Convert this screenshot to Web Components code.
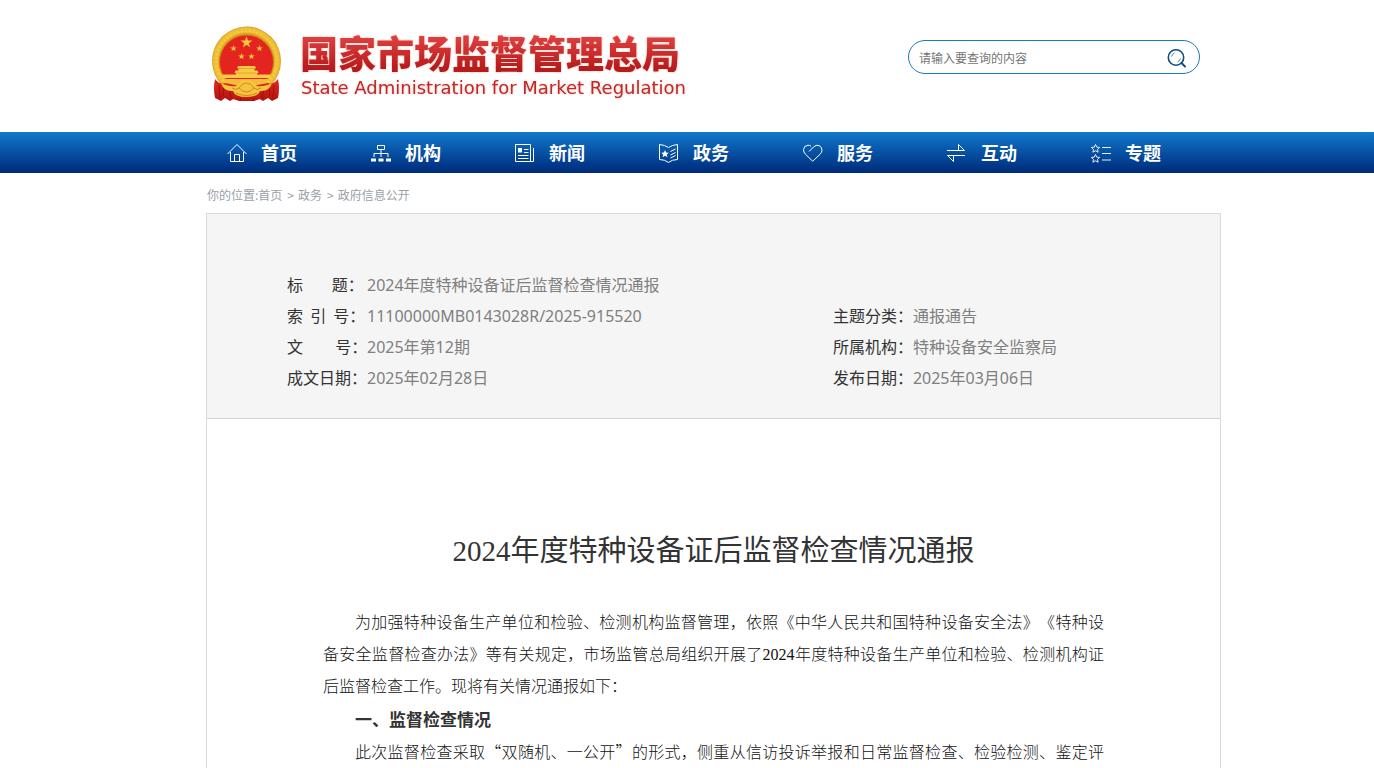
<!DOCTYPE html>
<html lang="zh-CN">
<head>
<meta charset="utf-8">
<meta name="viewport" content="width=device-width, initial-scale=1">
<title>2024年度特种设备证后监督检查情况通报</title>
<style>
  :root {
    --sans: "Noto Sans", "Noto Sans CJK SC", sans-serif;
    --cjk: "Noto Sans CJK SC", sans-serif;
    --mixed: "Liberation Serif", "Noto Sans CJK SC", sans-serif;
    --frame: #d5dae3;
  }
  body { margin: 0; background: #fff; font-family: var(--sans); color: #333; }
</style>
</head>
<body>
<samr-page>
  <samr-header slot="header">
    <samr-brand slot="brand"></samr-brand>
    <samr-search slot="search"></samr-search>
  </samr-header>
  <samr-nav slot="nav">
    <samr-nav-item icon="home">首页</samr-nav-item>
    <samr-nav-item icon="org">机构</samr-nav-item>
    <samr-nav-item icon="news">新闻</samr-nav-item>
    <samr-nav-item icon="book">政务</samr-nav-item>
    <samr-nav-item icon="heart">服务</samr-nav-item>
    <samr-nav-item icon="swap">互动</samr-nav-item>
    <samr-nav-item icon="topics">专题</samr-nav-item>
  </samr-nav>
  <samr-breadcrumb></samr-breadcrumb>
  <samr-meta>
    <samr-field wide label="标        题：">2024年度特种设备证后监督检查情况通报</samr-field>
    <samr-field label="索  引  号：">11100000MB0143028R/2025-915520</samr-field>
    <samr-field label="主题分类：">通报通告</samr-field>
    <samr-field label="文         号：">2025年第12期</samr-field>
    <samr-field label="所属机构：">特种设备安全监察局</samr-field>
    <samr-field label="成文日期：">2025年02月28日</samr-field>
    <samr-field label="发布日期：">2025年03月06日</samr-field>
  </samr-meta>
  <samr-article></samr-article>
</samr-page>

<script>
class BaseElement extends HTMLElement {
  constructor() {
    super();
    this.attachShadow({ mode: 'open' }).innerHTML = this.constructor.markup;
  }
}

class SamrPage extends BaseElement {
  static markup = `
    <style>
      :host { display: flex; flex-direction: column; min-height: 100vh; }
      main {
        flex: 1; display: flex; flex-direction: column;
        box-sizing: border-box; width: 100%; max-width: 1068px;
        margin: 0 auto; padding-left: 53px;
      }
      ::slotted(samr-article) { flex: 1; }
    </style>
    <slot name="header"></slot>
    <slot name="nav"></slot>
    <main><slot></slot></main>`;
}

class SamrHeader extends BaseElement {
  static markup = `
    <style>
      :host { display: block; }
      header {
        box-sizing: border-box; width: 100%; max-width: 1068px; height: 132px;
        margin: 0 auto; padding: 26px 21px 0 59px;
        display: flex; justify-content: space-between; align-items: flex-start;
      }
      ::slotted(samr-search) { margin-top: 14px; }
    </style>
    <header><slot name="brand"></slot><slot name="search"></slot></header>`;
}

class SamrBrand extends BaseElement {
  static markup = `
    <style>
      :host { display: block; }
      a { display: flex; gap: 18px; text-decoration: none; color: #c3272b; }
      svg { width: 70px; height: 76px; flex: none; }
      .names { display: flex; flex-direction: column; padding-top: 6px; white-space: nowrap; }
      .names { filter: drop-shadow(0 0 1px rgba(225, 140, 110, .55)); }
      strong {
        font: 900 38px/40px var(--cjk);
        background: linear-gradient(#e04040 10%, #b91a1c 90%);
        -webkit-background-clip: text; background-clip: text; color: transparent;
      }
      .en { font: 18px/22px "DejaVu Sans", sans-serif; padding: 5px 0 0 1px; }
    </style>
    <a href="#">
      <svg viewBox="0 0 70 76" aria-hidden="true">
        <defs>
          <radialGradient id="gold" cx=".5" cy=".5" r=".5">
            <stop offset=".78" stop-color="#d99a1e"/><stop offset=".86" stop-color="#f7cf3e"/>
            <stop offset=".95" stop-color="#efbd33"/><stop offset="1" stop-color="#d9982a"/>
          </radialGradient>
          <linearGradient id="cloth" x1="0" x2="0" y1="0" y2="1">
            <stop offset="0" stop-color="#e02a20"/><stop offset="1" stop-color="#b5120f"/>
          </linearGradient>
          <path id="star" d="M0-10 2.3-3.1 9.5-3.1 3.7 1.2 5.9 8.1 0 3.8-5.9 8.1-3.7 1.2-9.5-3.1-2.3-3.1Z" fill="#f9c93c"/>
        </defs>
        <circle cx="34.500" cy="35" r="34.500" fill="url(#gold)"/>
        <circle cx="34.500" cy="35" r="30.500" fill="none" stroke="#e3ac2e" stroke-width="3" stroke-dasharray="1.500 2.500" opacity=".4"/>
        <circle cx="34.500" cy="36" r="27" fill="#e3241f" stroke="#c98a1a" stroke-width=".8"/>
        <use href="#star" transform="translate(34.500 16.500) scale(.62)"/>
        <use href="#star" transform="translate(21.500 22.500) scale(.35)"/>
        <use href="#star" transform="translate(47.500 22.500) scale(.35)"/>
        <use href="#star" transform="translate(29.500 30.500) scale(.35)"/>
        <use href="#star" transform="translate(39.500 30.500) scale(.35)"/>
        <path d="M26 40h17l1 2.500h-1.500v2h3l1 2.500h-1.500v1.500h13.500v3.500h-48v-3.500h13.500v-1.500h-1.500l1-2.500h3v-2h-1.500z" fill="#f8ca45"/>
        <path d="M26 42.500h17M25 47h19" stroke="#d98d22" stroke-width=".6"/>
        <path d="M12.500 53h44q-2 4-5 6h-34q-3-2-5-6z" fill="#f3bd38"/>
        <path d="M3 53 Q1 62 3 72 L9 75 13 72 18 75 23 72 23 59 13 57 Q8 59 3 53z" fill="url(#cloth)"/>
        <path d="M66 53 Q68 62 66 72 L60 75 56 72 51 75 46 72 46 59 56 57 Q61 59 66 53z" fill="url(#cloth)"/>
        <path d="M22 64h25l1 9-6 2h-15l-6-2z" fill="url(#cloth)"/>
        <path d="M7 59l1 13M12 60l-1 10M17 62l2 10M62 59l-1 13M57 60l1 10M52 62l-2 10M29 72l-1 3M41 72l1 3" stroke="#8f0d0c" stroke-width=".8"/>
        <path d="M9 57Q18 61 24 60 Q28 54 34.500 54 T45 60 Q51 61 60 57 Q57 66 48 65 Q46 71 34.500 71 T21 65 Q12 66 9 57z" fill="#f5c540"/>
        <path d="M27 62Q30 57 34.500 57T42 62Q39 66 34.500 66T27 62M20 62Q24 65 27 62M49 62Q45 65 42 62M24 67Q34 72 45 67" fill="none" stroke="#c98118" stroke-width=".9"/>
      </svg>
      <span class="names">
        <strong>国家市场监督管理总局</strong>
        <span class="en">State Administration for Market Regulation</span>
      </span>
    </a>`;
}

class SamrSearch extends BaseElement {
  static markup = `
    <style>
      :host { display: block; }
      form {
        box-sizing: border-box; width: 292px; height: 34px; padding: 2px 12px 0 10px;
        display: flex; align-items: center;
        border: 1px solid #1f7ab8; border-radius: 17px;
      }
      input {
        flex: 1; min-width: 0; border: 0; padding: 0; outline: 0; background: none;
        font: 12px/20px var(--cjk); color: #333;
      }
      input::placeholder { color: #757575; }
      button { border: 0; padding: 0; background: none; width: 20px; height: 20px; }
      svg { display: block; width: 20px; height: 20px; }
    </style>
    <form role="search">
      <input type="text" aria-label="搜索" placeholder="请输入要查询的内容">
      <button type="button" aria-label="查询">
        <svg viewBox="0 0 20 20" fill="none" stroke="#124a86">
          <circle cx="9" cy="9.500" r="7.700" stroke-width="1.600"/>
          <path d="M14.500 15l3.500 3.500" stroke-width="2" stroke-linecap="round"/>
          <path d="M4.500 8.500Q5.200 6 7.500 5M13.500 10.500Q12.800 13 10.500 14" stroke-width="1" stroke="#4f7fb0"/>
        </svg>
      </button>
    </form>`;
}

class SamrNav extends BaseElement {
  static markup = `
    <style>
      :host { display: block; background: linear-gradient(#1079cc, #003182 90%, #002c74); }
      nav {
        box-sizing: border-box; width: 100%; max-width: 1068px; height: 41px;
        margin: 0 auto; padding-left: 74px; display: flex; align-items: center; gap: 74px;
      }
    </style>
    <nav><slot></slot></nav>`;
}

const NAV_ICONS = {
  home: '<path d="M.5 11 10 1.500 19.500 11M3.500 9v9.500h13V9M7.500 18.500v-7h5v7"/>',
  org: '<path d="M6.500 2.500h7v4h-7zM10 6.500v4M3 14v-3.500h14V14M10 10.500V14"/><path d="M0 17h5M7.500 17h5M15 17h5" stroke-width="3"/>',
  news: '<path d="M.5 1.500h15v17H.5zM18.500 5v13.500h-3M9 6.500h4.500M9 9.500h4.500M3 12.500h10.500M3 15.500h10.500"/><path d="M3 5h4v4.500H3z" fill="#fff" stroke="none"/>',
  book: '<path d="M.5 1.500v15Q6 16.500 9.500 19.500 13 16.500 18.500 16.500v-15Q13 2 9.500 4.500 6 2 .5 1.500zM11.500 8.500l5-2.500M11.500 12l5-2.500M11.500 15l5-2.500"/><path d="M6 7l1.100 2.500 2.700.2-2 1.800.7 2.700L6 12.800l-2.500 1.400.7-2.700-2-1.800 2.700-.2z" fill="#fff" stroke="none"/>',
  heart: '<path d="M6 8.500 10.500 4Q13 1.500 16 2.500 19.300 4 19 7.500 18.800 9.500 17 11.300L9.700 18.200 2.500 11.300Q.3 9 .5 6.500 1 2.500 5 2.200 6.500 2.200 8 3.200"/>',
  swap: '<path d="M0 7.500h17.500L11.500 1.500V7M18 12.500H.5l6 6v-6"/>',
  topics: '<path d="M11 4.500h9M11 10.500h9M11 17h9M4.500 1.500l1.200 2.600 2.900.3-2.100 2 .6 2.800L4.500 7.800 1.900 9.200 2.500 6.400.4 4.400l2.900-.3zM4.500 11.500l1.200 2.600 2.900.3-2.100 2 .6 2.800L4.500 17.800l-2.600 1.400.6-2.800-2.100-2 2.900-.3z" stroke-width=".9"/>'
};

class SamrNavItem extends BaseElement {
  static markup = `
    <style>
      :host { display: block; flex: none; }
      a {
        display: flex; align-items: center; gap: 14px; color: #fff;
        text-decoration: none; font: 700 18px/27px var(--cjk);
      }
      svg { width: 20px; height: 20px; overflow: visible; fill: none; stroke: #fff; stroke-width: 1; }
    </style>
    <a href="#"><svg viewBox="0 0 20 20" aria-hidden="true"></svg><slot></slot></a>`;
  connectedCallback() {
    this.shadowRoot.querySelector('svg').innerHTML = NAV_ICONS[this.getAttribute('icon')];
  }
}

class SamrBreadcrumb extends BaseElement {
  static markup = `
    <style>
      :host { display: block; padding: 13px 0 9px 1px; font: 12px/18px var(--cjk); color: #9a9fa8; }
      nav { display: flex; }
      a { color: inherit; text-decoration: none; }
      .sep { margin: 0 4px 0 5px; }
    </style>
    <nav aria-label="位置">
      <span>你的位置:</span><a href="#">首页</a><span class="sep">&gt;</span><a href="#">政务</a><span class="sep">&gt;</span><a href="#">政府信息公开</a>
    </nav>`;
}

class SamrMeta extends BaseElement {
  static markup = `
    <style>
      :host {
        display: grid; grid-template-columns: 16fr 9fr;
        padding: 56px 80px 24px; background: #f5f5f5;
        border: 1px solid var(--frame); border-bottom-color: #d2d4d8;
      }
      ::slotted([wide]) { grid-column: 1 / -1; }
    </style>
    <slot></slot>`;
}

class SamrField extends BaseElement {
  static markup = `
    <style>
      :host {
        display: flex; align-items: baseline; height: 31px;
        font: 16px/31px var(--sans); color: #808080;
      }
      .label {
        flex: none; width: 80px; line-height: 28px; white-space: pre;
        font-family: var(--cjk); color: #333;
      }
    </style>
    <span class="label"></span><span><slot></slot></span>`;
  connectedCallback() {
    this.shadowRoot.querySelector('.label').textContent = this.getAttribute('label');
  }
}

class SamrArticle extends BaseElement {
  static markup = `
    <style>
      :host { display: block; padding: 112px 116px 0; border: solid var(--frame); border-width: 0 1px; }
      h1 {
        margin: 0 0 36px; text-align: center; font: 400 29px/40px var(--mixed); color: #333;
      }
      p, h2 { margin: 0; text-indent: 32px; color: #333; line-height: 32px; font-family: var(--cjk); }
      p { font-size: 16px; font-weight: 300; color: #111; text-align: justify; text-spacing-trim: space-all; }
      h2 { font-size: 17px; font-weight: 700; }
      .lead { font-family: var(--mixed); }
      .full { text-align-last: justify; }
    </style>
    <article>
      <h1>2024年度特种设备证后监督检查情况通报</h1>
      <p class="lead">为加强特种设备生产单位和检验、检测机构监督管理，依照《中华人民共和国特种设备安全法》《特种设备安全监督检查办法》等有关规定，市场监管总局组织开展了2024年度特种设备生产单位和检验、检测机构证后监督检查工作。现将有关情况通报如下：</p>
      <h2>一、监督检查情况</h2>
      <p class="full">此次监督检查采取“双随机、一公开”的形式，侧重从信访投诉举报和日常监督检查、检验检测、鉴定评</p>
    </article>`;
}

customElements.define('samr-page', SamrPage);
customElements.define('samr-header', SamrHeader);
customElements.define('samr-brand', SamrBrand);
customElements.define('samr-search', SamrSearch);
customElements.define('samr-nav', SamrNav);
customElements.define('samr-nav-item', SamrNavItem);
customElements.define('samr-breadcrumb', SamrBreadcrumb);
customElements.define('samr-meta', SamrMeta);
customElements.define('samr-field', SamrField);
customElements.define('samr-article', SamrArticle);
</script>
</body>
</html>
